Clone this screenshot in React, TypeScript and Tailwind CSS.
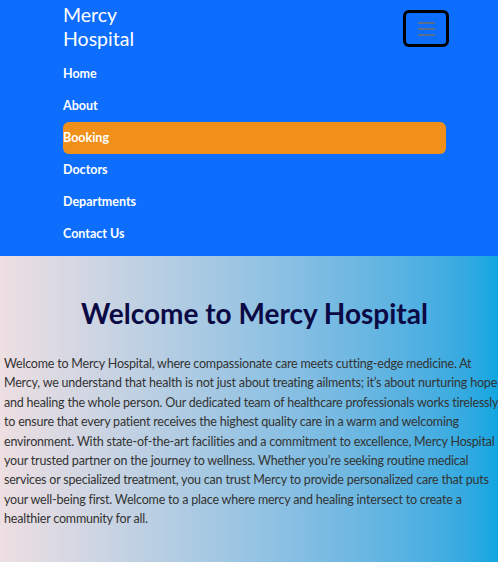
import { useState } from 'react';

const links = ['Home', 'About', 'Booking', 'Doctors', 'Departments', 'Contact Us'];

const lines = [
  'Welcome to Mercy Hospital, where compassionate care meets cutting-edge medicine. At',
  'Mercy, we understand that health is not just about treating ailments; it’s about nurturing hope',
  'and healing the whole person. Our dedicated team of healthcare professionals works tirelessly',
  'to ensure that every patient receives the highest quality care in a warm and welcoming',
  'environment. With state-of-the-art facilities and a commitment to excellence, Mercy Hospital is',
  'your trusted partner on the journey to wellness. Whether you’re seeking routine medical',
  'services or specialized treatment, you can trust Mercy to provide personalized care that puts',
  'your well-being first. Welcome to a place where mercy and healing intersect to create a',
  'healthier community for all.',
];

export default function App() {
  const [active] = useState('Booking');

  return (
    <div className="min-h-[568px] overflow-hidden bg-white font-['Lato',sans-serif]">
      {/* Navbar (collapsed menu open) */}
      <nav className="bg-[#0d6efd] pb-[6px]">
        <div className="pl-[63px] pr-[49px]">
          <div className="flex items-start justify-between pt-[1px]">
            <a href="#" className="mt-[2px] w-[90px] text-[19.5px] leading-[24px] text-white">
              Mercy Hospital
            </a>
            <button className="mt-[9px] flex h-[37px] w-[46px] flex-col items-center justify-center gap-[4px] rounded-[6px] border-[3px] border-black">
              <span className="h-[2px] w-[17px] bg-[#5a6f8f]" />
              <span className="h-[2px] w-[17px] bg-[#5a6f8f]" />
              <span className="h-[2px] w-[17px] bg-[#5a6f8f]" />
            </button>
          </div>
          <ul className="mt-[7px] mr-[3px] flex flex-col">
            {links.map((l) => (
              <li key={l}>
                <a
                  href="#"
                  className={
                    'flex h-[32px] items-center text-[12.5px] font-bold text-white ' +
                    (l === active ? 'rounded-[6px] bg-[#f0901a]' : '')
                  }
                >
                  {l}
                </a>
              </li>
            ))}
          </ul>
        </div>
      </nav>

      {/* Welcome section */}
      <section className="h-[306px] overflow-hidden bg-gradient-to-r from-[#eedfe2] to-[#0ea6e0] pt-[39px]">
        <h1 className="pl-[11px] text-center text-[28px] font-bold leading-[36px] text-[#0b0a45]">
          Welcome to Mercy Hospital
        </h1>
        <p className="mt-[23px] ml-[4px] whitespace-nowrap text-[12.5px] leading-[19.4px] tracking-[-0.2px] text-[#333]">
          {lines.map((t, i) => (
            <span key={i}>
              {t}
              {i < lines.length - 1 && <br />}
            </span>
          ))}
        </p>
      </section>
    </div>
  );
}
